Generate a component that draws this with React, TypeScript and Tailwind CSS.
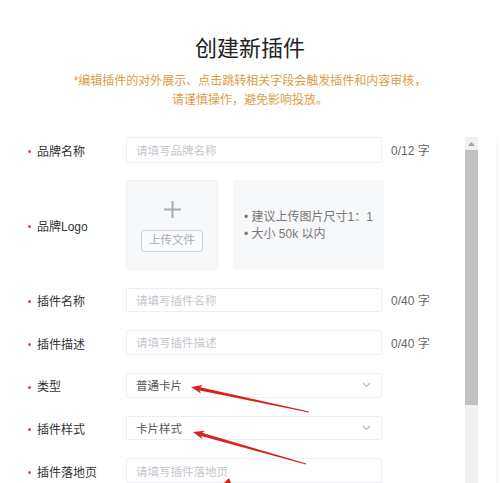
import { ReactNode } from "react";

type Pt = [number, number];

// red annotation arrow, tip -> tail, shaft tapers toward the tail
function Arrow({ tip, tail }: { tip: Pt; tail: Pt }) {
  const dx = tail[0] - tip[0];
  const dy = tail[1] - tip[1];
  const len = Math.hypot(dx, dy);
  const d: Pt = [dx / len, dy / len];
  const n: Pt = [-d[1], d[0]];
  const at = (base: Pt, a: number, b: number): string =>
    `${base[0] + d[0] * a + n[0] * b},${base[1] + d[1] * a + n[1] * b}`;
  const shaft = [at(tip, 8, 1.7), at(tail, 0, 0.5), at(tail, 0, -0.5), at(tip, 8, -1.7)].join(" ");
  const head = [at(tip, 0, 0), at(tip, 11, 4.3), at(tip, 8, 0), at(tip, 11, -4.3)].join(" ");
  return (
    <g fill="#d8231a">
      <polygon points={shaft} />
      <polygon points={head} />
    </g>
  );
}

function Label({ text }: { text: string }) {
  return (
    <div className="flex items-center w-[98px] shrink-0 pt-[4px] text-[12px] text-[#333]">
      <span className="w-[3px] h-[3px] rounded-full bg-[#e0465e] mr-[6px]" />
      {text}
    </div>
  );
}

function Row({ label, children, className }: { label: string; children: ReactNode; className: string }) {
  return (
    <div className={`flex items-center ${className}`}>
      <Label text={label} />
      {children}
    </div>
  );
}

function Input({ placeholder, count }: { placeholder: string; count?: string }) {
  return (
    <>
      <div className="w-[256px] h-full border border-[#eceef1] rounded-[2px] flex items-center px-[9px] pt-[3px] text-[11.5px] text-[#c3c6cc]">
        {placeholder}
      </div>
      {count && <div className="ml-[9px] pt-[3px] text-[12px] text-[#666]">{count}</div>}
    </>
  );
}

function Select({ value }: { value: string }) {
  return (
    <div className="w-[256px] h-full border border-[#eceef1] rounded-[2px] flex items-center justify-between px-[9px] text-[11.5px] text-[#555]">
      <span className="pt-[3px]">{value}</span>
      <svg width="9" height="6" viewBox="0 0 9 6" className="mr-[1px]">
        <path d="M1 1l3.5 3.5L8 1" fill="none" stroke="#b5b8be" strokeWidth="1.1" />
      </svg>
    </div>
  );
}

export default function App() {
  return (
    <div className="relative w-[500px] h-[483px] overflow-hidden bg-white font-['Liberation_Sans','Noto_Sans_CJK_SC',sans-serif]">
      <div className="h-[137px] flex flex-col items-center pt-[34px]">
        <div className="text-[22px] leading-[30px] text-[#222]">创建新插件</div>
        <div className="mt-[8px] text-[12px] leading-[19px] text-[#e09b45] text-center">
          <div>*编辑插件的对外展示、点击跳转相关字段会触发插件和内容审核，</div>
          <div>请谨慎操作，避免影响投放。</div>
        </div>
      </div>

      <div className="flex h-[346px]">
        <div className="w-[465px] pl-[28px] flex flex-col">
          <Row label="品牌名称" className="h-[26px]">
            <Input placeholder="请填写品牌名称" count="0/12 字" />
          </Row>
          <Row label="品牌Logo" className="h-[91px] mt-[17px]">
            <div className="w-[92px] h-full bg-[#f7f8fa] border border-[#f0f1f3] rounded-[3px] flex flex-col items-center pt-[20px]">
              <svg width="17" height="17" viewBox="0 0 17 17">
                <path d="M8.5 0v17M0 8.5h17" stroke="#a9acb1" strokeWidth="2" />
              </svg>
              <div className="mt-[12px] w-[62px] h-[22px] border border-[#cfd2d6] rounded-[3px] flex items-center justify-center text-[11.5px] text-[#a9acb1] bg-[#f9fafb]">
                上传文件
              </div>
            </div>
            <div className="ml-[15px] w-[151px] h-full bg-[#f7f8fa] rounded-[3px] flex flex-col justify-center pl-[11px] pt-[3px] text-[12px] leading-[17px] text-[#777]">
              <div>• 建议上传图片尺寸1：1</div>
              <div>• 大小 50k 以内</div>
            </div>
          </Row>
          <Row label="插件名称" className="h-[25px] mt-[18px]">
            <Input placeholder="请填写插件名称" count="0/40 字" />
          </Row>
          <Row label="插件描述" className="h-[25px] mt-[18px]">
            <Input placeholder="请填写插件描述" count="0/40 字" />
          </Row>
          <Row label="类型" className="h-[25px] mt-[18px]">
            <Select value="普通卡片" />
          </Row>
          <Row label="插件样式" className="h-[25px] mt-[18px]">
            <Select value="卡片样式" />
          </Row>
          <Row label="插件落地页" className="h-[25px] mt-[18px]">
            <Input placeholder="请填写插件落地页" />
          </Row>
        </div>

        {/* scrollbar */}
        <div className="w-[13px] h-full flex flex-col bg-[#f1f1f1]">
          <div className="h-[13px] flex items-center justify-center">
            <svg width="7" height="4" viewBox="0 0 7 4">
              <path d="M0 4L3.5 0L7 4z" fill="#a3a3a3" />
            </svg>
          </div>
          <div className="h-[255px] bg-[#c1c1c1]" />
        </div>
        <div className="flex-1" />
        <div className="w-px h-full bg-[#f2f2f2] mr-[2px]" />
      </div>

      <svg className="absolute inset-0 pointer-events-none" width="500" height="483">
        <Arrow tip={[191, 387]} tail={[309, 412]} />
        <Arrow tip={[193, 432]} tail={[306, 464]} />
        <polygon points="224,483 229,478 231,483" fill="#d8231a" />
      </svg>
    </div>
  );
}
